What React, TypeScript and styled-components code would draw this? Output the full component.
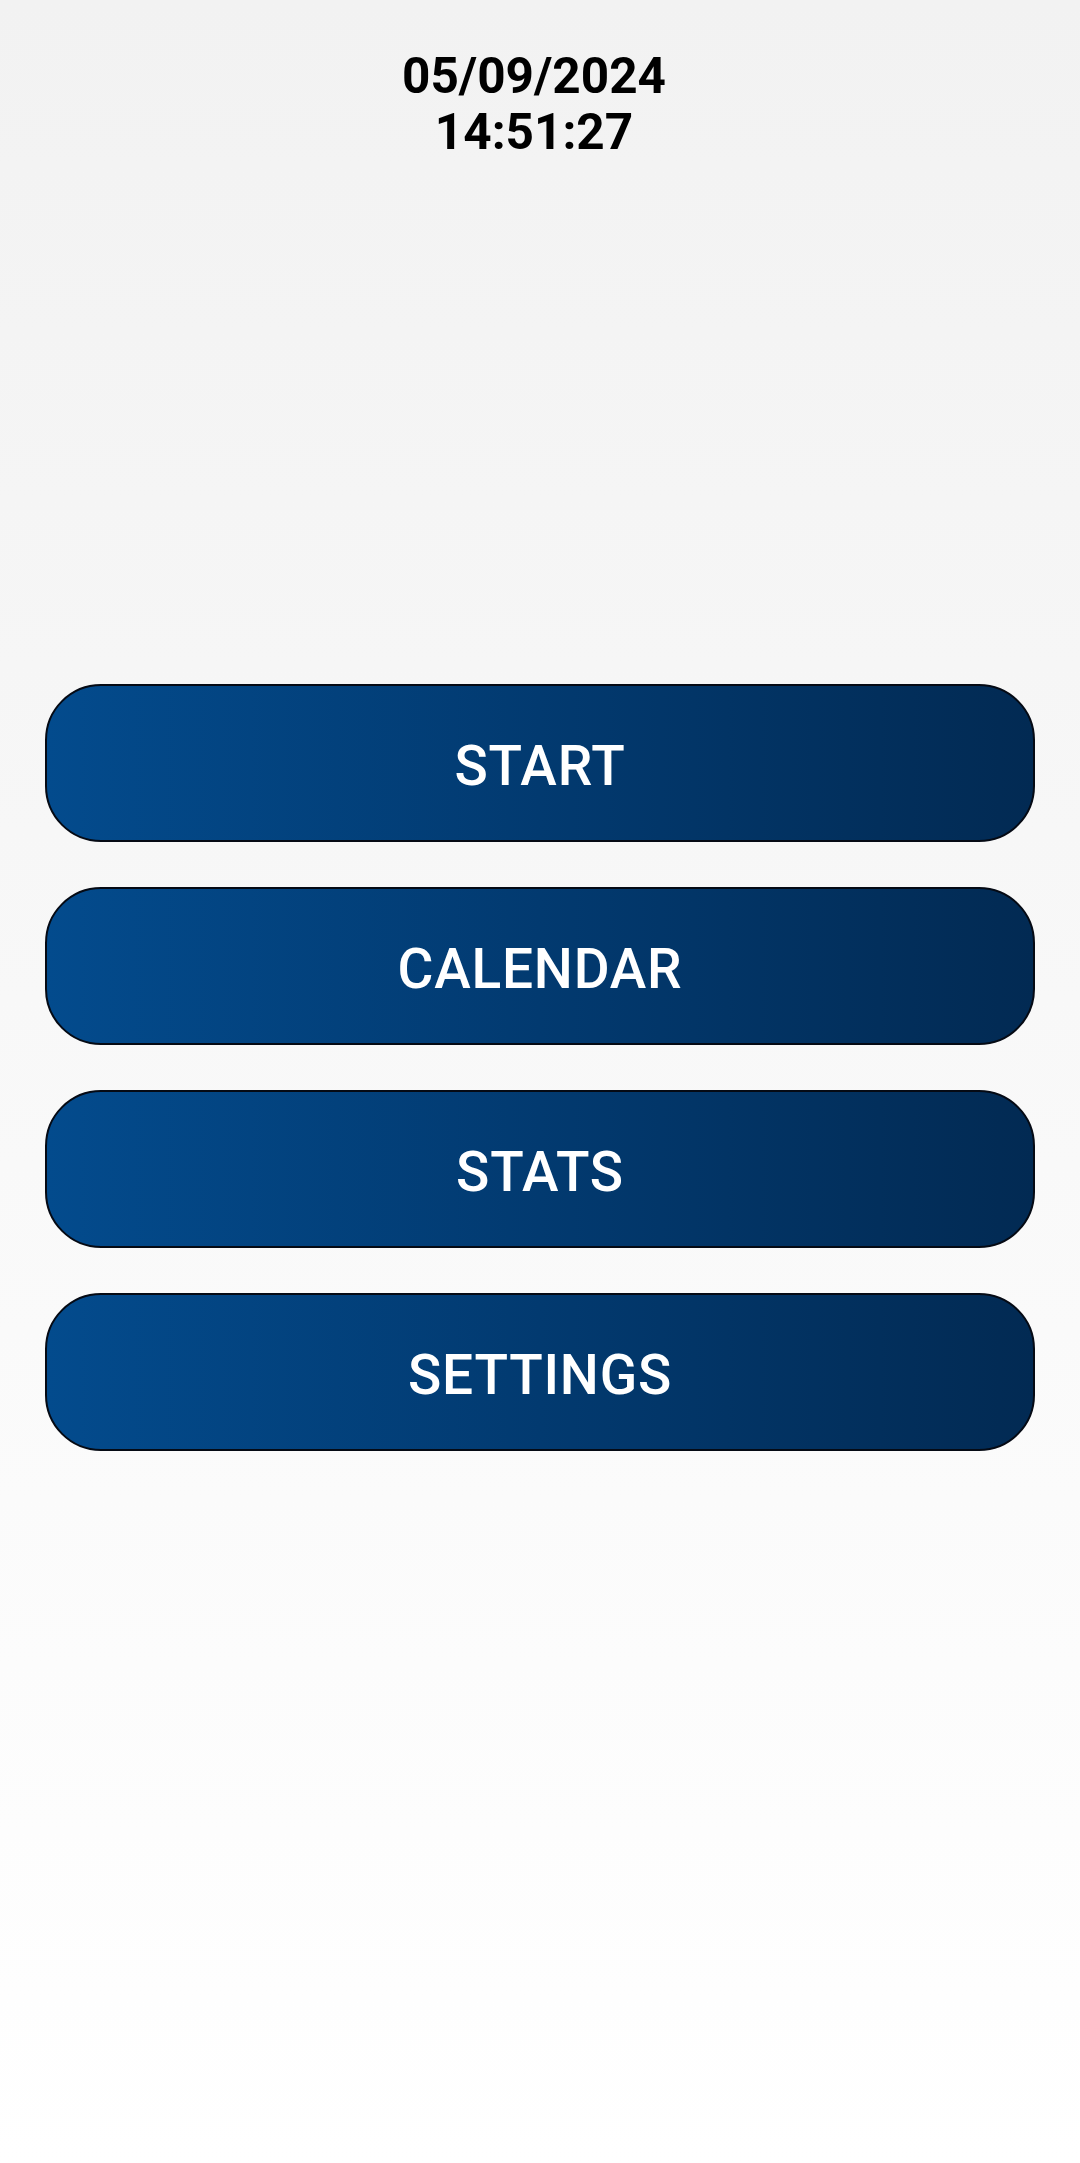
import React from "react";
import styled, { createGlobalStyle } from "styled-components";

const GlobalStyle = createGlobalStyle`
  html, body {
    margin: 0;
    padding: 0;
  }
  body {
    font-family: Roboto, "Noto Sans", "Liberation Sans", sans-serif;
  }
`;

const Screen = styled.div`
  width: 1080px;
  min-height: 2163px;
  box-sizing: border-box;
  background: linear-gradient(to bottom, #f2f2f2 0%, #ffffff 100%);
  display: flex;
  flex-direction: column;
  align-items: center;
  padding-top: 48px;
`;

const Clock = styled.div`
  font-family: Roboto, "Liberation Sans", sans-serif;
  font-weight: 700;
  font-size: 49.5px;
  line-height: 56px;
  color: #000000;
  text-align: center;
  margin-right: 12px;
`;

const Menu = styled.nav`
  width: 990px;
  display: flex;
  flex-direction: column;
  gap: 45px;
  margin-top: 524px;
`;

const MenuButton = styled.button`
  height: 158px;
  width: 100%;
  box-sizing: border-box;
  border: 2.5px solid #050a14;
  border-radius: 56px;
  background: linear-gradient(to right, #034b8d 0%, #023a70 50%, #022a53 100%);
  color: #ffffff;
  font-family: Roboto, "Liberation Sans", sans-serif;
  font-weight: 500;
  font-size: 55px;
  letter-spacing: 0.8px;
  text-transform: uppercase;
  display: flex;
  align-items: center;
  justify-content: center;
  padding: 5px 0 0 0;
  cursor: pointer;
`;

const items = ["START", "CALENDAR", "STATS", "SETTINGS"];

export default function App() {
  return (
    <>
      <GlobalStyle />
      <Screen>
        <Clock>
          <div>05/09/2024</div>
          <div>14:51:27</div>
        </Clock>
        <Menu>
          {items.map((label) => (
            <MenuButton key={label}>{label}</MenuButton>
          ))}
        </Menu>
      </Screen>
    </>
  );
}
